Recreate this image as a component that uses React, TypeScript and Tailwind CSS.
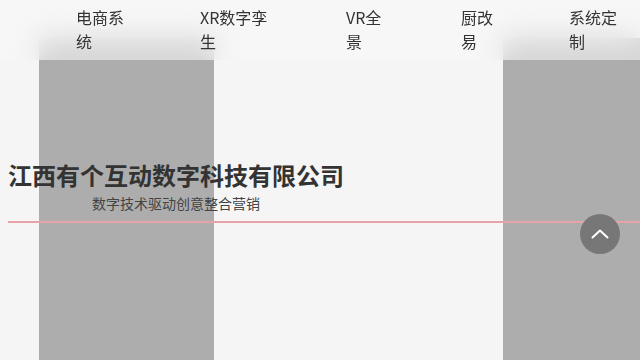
const nav = [
  { label: "电商系统", w: "w-[124px]", tw: "w-[52px]" },
  { label: "XR数字孪生", w: "w-[146px]", tw: "w-[74px]" },
  { label: "VR全景", w: "w-[115px]", tw: "w-[50px]" },
  { label: "厨改易", w: "w-[108px]", tw: "w-[34px]" },
  { label: "系统定制", w: "w-[71px]", tw: "w-[52px]" },
];

export default function App() {
  return (
    <div
      className="relative h-[360px] w-[640px] overflow-hidden bg-[#f5f5f5] text-[#333]"
      style={{ fontFamily: '"Noto Sans CJK SC", "Noto Sans", sans-serif' }}
    >
      {/* picture blocks behind the content */}
      <div className="absolute inset-0 flex pt-[38px]">
        <div className="ml-[39px] w-[175px] bg-[#adadad]" />
        <div className="ml-auto w-[137px] bg-[#adadad]" />
      </div>

      <header className="absolute left-0 right-0 top-0 z-10 h-[60px] bg-[#f8f8f8]/55 backdrop-blur-[14px]">
        <ul className="flex pl-[76px] pt-[5px] text-[16px] leading-[24px]">
          {nav.map((n) => (
            <li key={n.label} className={`${n.w} shrink-0`}>
              <span className={`block ${n.tw}`}>{n.label}</span>
            </li>
          ))}
        </ul>
      </header>

      <main className="relative flex flex-col pt-[158px]">
        <h1 className="pl-[8px] text-[24px] font-bold leading-[34px] text-[#333]">
          江西有个互动数字科技有限公司
        </h1>
        <p className="pl-[92px] text-[14px] leading-[22px] text-[#444]">数字技术驱动创意整合营销</p>
        <div className="ml-[8px] mt-[7px] h-[2px] bg-[#e8a2ab]" />
      </main>

      <button className="absolute left-[580px] top-[214px] z-20 flex h-[40px] w-[40px] items-center justify-center rounded-full bg-[#777]">
        <svg width="18" height="10" viewBox="0 0 18 10" fill="none">
          <path d="M1.5 8.5L9 1.5L16.5 8.5" stroke="white" strokeWidth="2" strokeLinecap="round" strokeLinejoin="round" />
        </svg>
      </button>
    </div>
  );
}
